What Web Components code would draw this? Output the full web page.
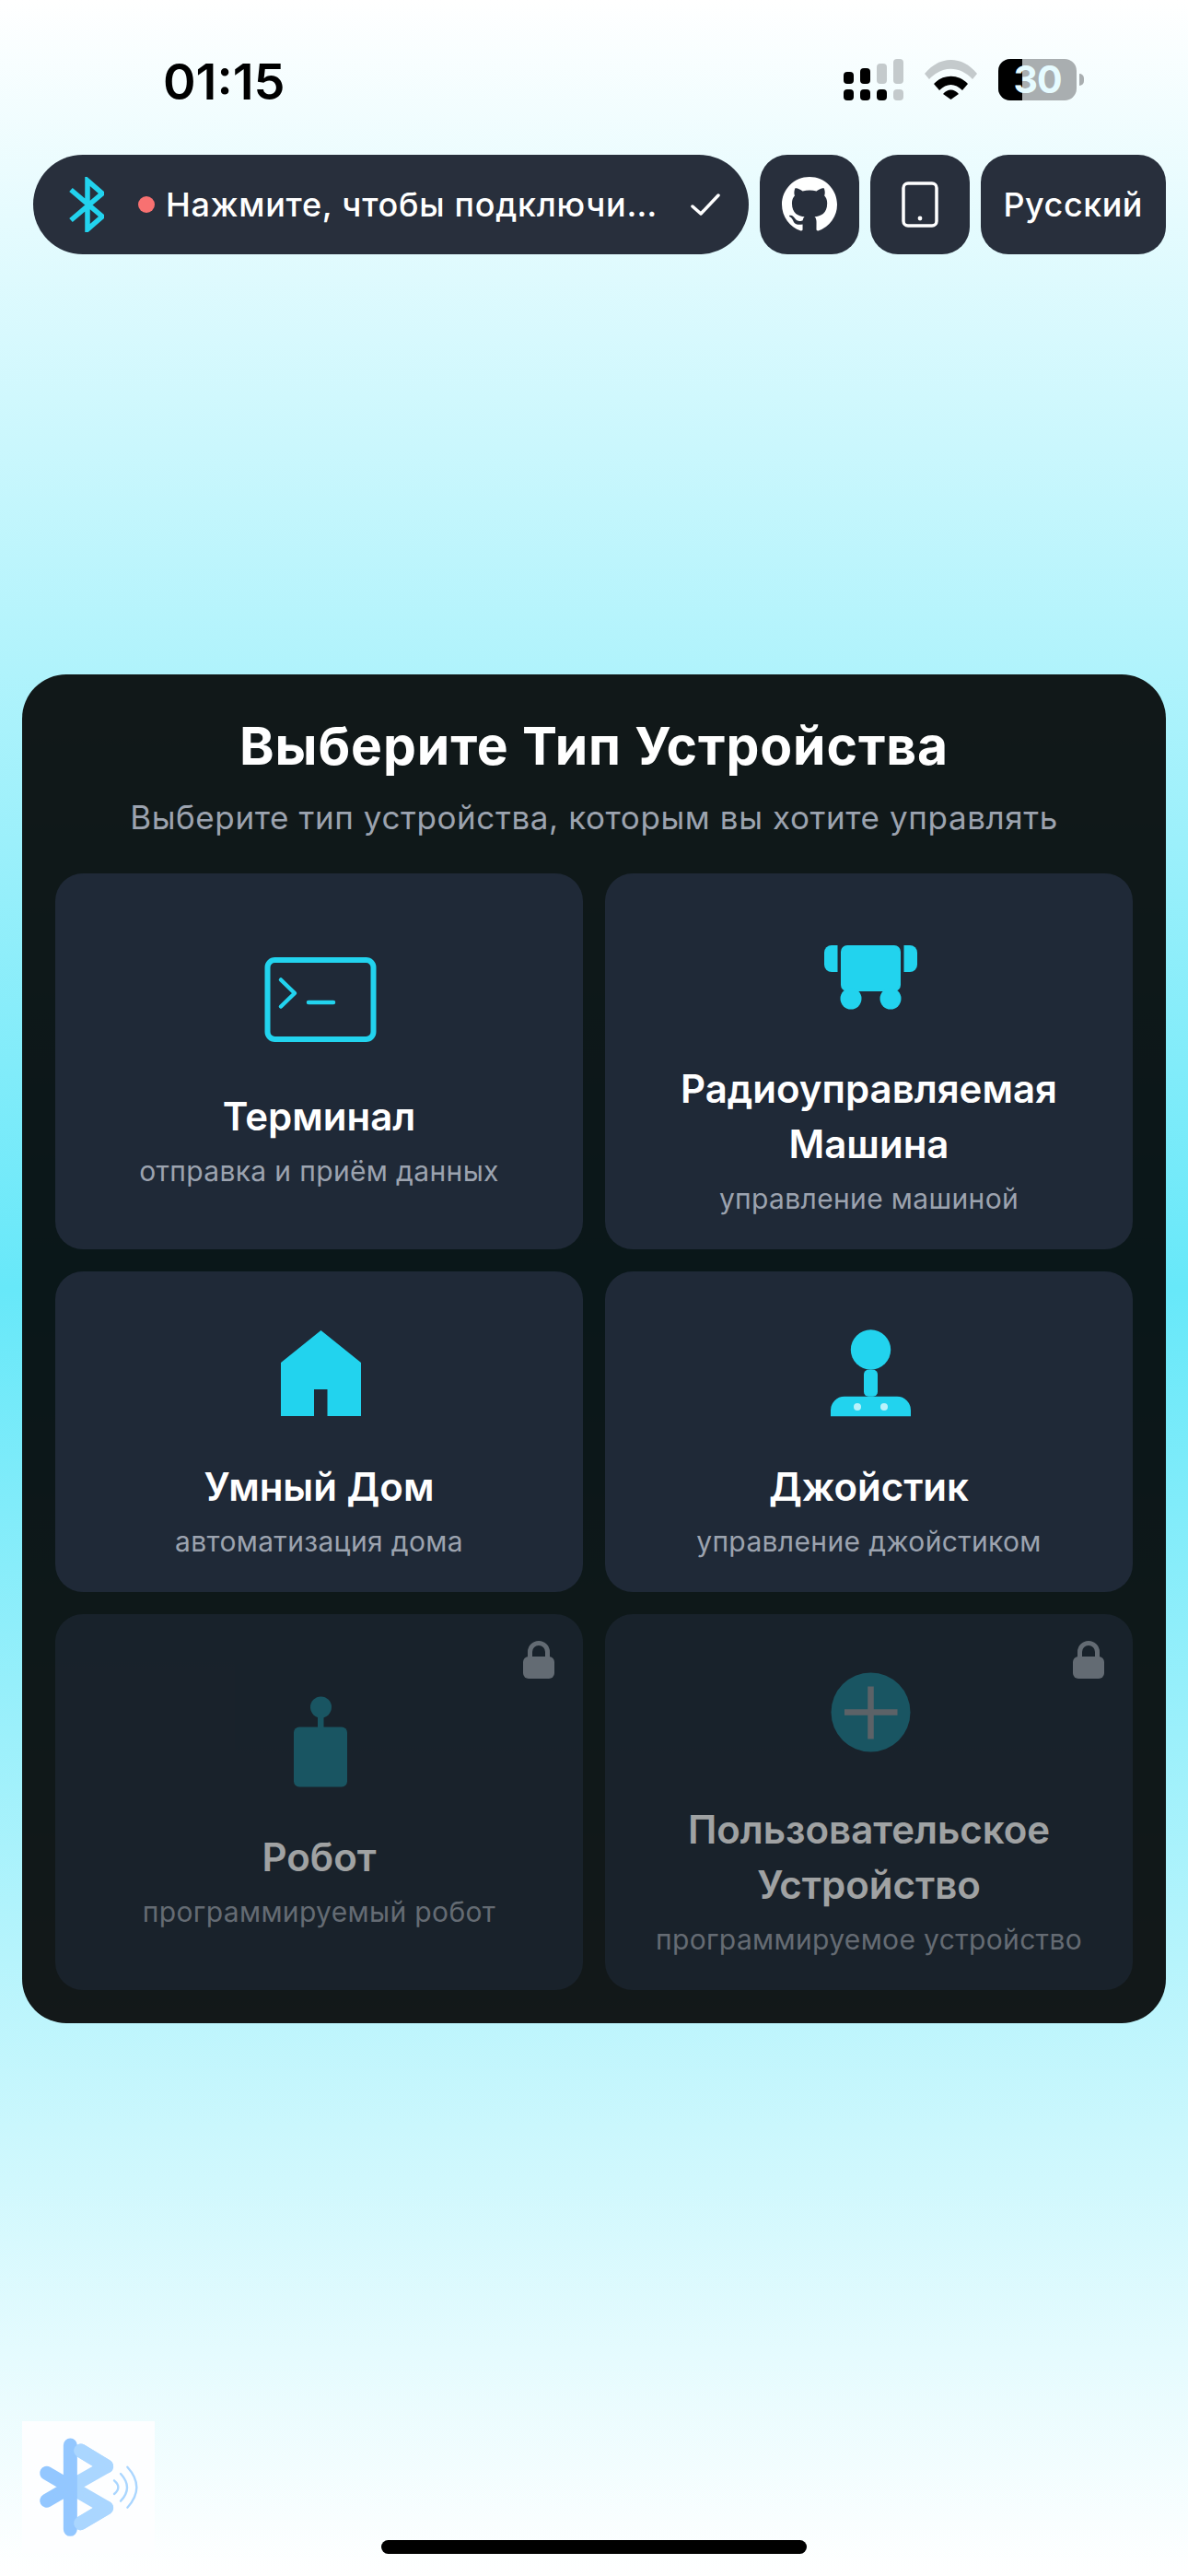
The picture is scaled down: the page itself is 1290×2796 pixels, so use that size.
<!DOCTYPE html>
<html lang="ru">
<head>
<meta charset="utf-8">
<title>Выберите Тип Устройства</title>
<style>
    html, body { margin: 0; padding: 0; }
    body {
        width: 1290px;
        height: 2796px;
        overflow: hidden;
        position: relative;
        background: linear-gradient(to bottom, #ffffff 0%, #67e8f9 50%, #ffffff 100%);
        font-family: Inter, "Noto Sans", sans-serif;
    }
</style>
</head>
<body>
<status-bar time="01:15"></status-bar>
<top-bar>
    <connect-pill>Нажмите, чтобы подключиться</connect-pill>
    <icon-button>
        <svg width="60" height="60" viewBox="0 0 16 16" fill="#fff"><path d="M8 0C3.58 0 0 3.58 0 8c0 3.54 2.29 6.53 5.47 7.59.4.07.55-.17.55-.38 0-.19-.01-.82-.01-1.49-2.01.37-2.53-.49-2.69-.94-.09-.23-.48-.94-.82-1.13-.28-.15-.68-.52-.01-.53.63-.01 1.08.58 1.23.82.72 1.21 1.87.87 2.33.66.07-.52.28-.87.51-1.07-1.78-.2-3.64-.89-3.64-3.95 0-.87.31-1.59.82-2.15-.08-.2-.36-1.02.08-2.12 0 0 .67-.21 2.2.82.64-.18 1.32-.27 2-.27s1.36.09 2 .27c1.53-1.04 2.2-.82 2.2-.82.44 1.1.16 1.92.08 2.12.51.56.82 1.27.82 2.15 0 3.07-1.87 3.75-3.65 3.95.29.25.54.73.54 1.48 0 1.07-.01 1.93-.01 2.2 0 .21.15.46.55.38A8.01 8.01 0 0 0 16 8c0-4.42-3.58-8-8-8z"/></svg>
    </icon-button>
    <icon-button>
        <svg width="40" height="50" viewBox="0 0 40 50" fill="none"><rect x="2" y="2" width="36" height="46" rx="5" stroke="#fff" stroke-width="3.5"/><circle cx="20" cy="40" r="2.4" fill="#fff"/></svg>
    </icon-button>
    <lang-button>Русский</lang-button>
</top-bar>
<device-panel heading="Выберите Тип Устройства" subheading="Выберите тип устройства, которым вы хотите управлять">
    <device-card name="Терминал" note="отправка и приём данных">
        <svg slot="icon" width="150" height="150" viewBox="0 0 150 150" fill="none" stroke="#22d3ee">
            <rect x="18.5" y="29" width="115" height="86" rx="8" stroke-width="6"/>
            <path d="M33 50.500 48 65 33 79.500" stroke-width="4.500" stroke-linecap="round" stroke-linejoin="round"/>
            <path d="M63 75H90" stroke-width="4.500" stroke-linecap="round"/>
        </svg>
    </device-card>
    <device-card name="Радиоуправляемая Машина" note="управление машиной">
        <svg slot="icon" width="150" height="150" viewBox="0 0 150 150" fill="#22d3ee">
            <rect x="44" y="43" width="65" height="50" rx="7"/>
            <path d="M40.500 43H34a8 8 0 0 0-8 8V64a8 8 0 0 0 8 8H40.500Z"/>
            <path d="M112.500 43H119a8 8 0 0 1 8 8V64a8 8 0 0 1-8 8H112.500Z"/>
            <circle cx="55" cy="101" r="11.500"/>
            <circle cx="98" cy="101" r="11.500"/>
        </svg>
    </device-card>
    <device-card name="Умный Дом" note="автоматизация дома">
        <svg slot="icon" width="150" height="150" viewBox="0 0 150 150" fill="#22d3ee">
            <path d="M76.500 29 120 64V122H83.500V93H69V122H33V64Z"/>
        </svg>
    </device-card>
    <device-card name="Джойстик" note="управление джойстиком">
        <svg slot="icon" width="150" height="150" viewBox="0 0 150 150" fill="#22d3ee">
            <circle cx="76.500" cy="50" r="21.700"/>
            <rect x="69" y="71.700" width="15" height="29" rx="5"/>
            <path d="M33 122.300V116a15 15 0 0 1 15-15.300H105a15 15 0 0 1 15 15.300V122.300Z"/>
            <circle cx="62" cy="112" r="4" fill="#b8f2fb"/>
            <circle cx="91" cy="112" r="4" fill="#b8f2fb"/>
        </svg>
    </device-card>
    <device-card locked name="Робот" note="программируемый робот">
        <svg slot="icon" width="150" height="150" viewBox="0 0 150 150" fill="#22d3ee">
            <rect x="47" y="57.600" width="58" height="65" rx="6"/>
            <rect x="73" y="44" width="6.500" height="14"/>
            <circle cx="76.500" cy="36" r="11.500"/>
        </svg>
    </device-card>
    <device-card locked name="Пользовательское Устройство" note="программируемое устройство">
        <svg slot="icon" width="150" height="150" viewBox="0 0 150 150" fill="#22d3ee">
            <circle cx="76.500" cy="71.500" r="43"/>
            <path d="M76.500 43.500V100.500M48 71.500H105.500" stroke="#fff" stroke-width="6.500" fill="none"/>
        </svg>
    </device-card>
</device-panel>
<brand-logo></brand-logo>
<home-indicator></home-indicator>

<script>
class StatusBar extends HTMLElement {
    connectedCallback() {
        this.attachShadow({ mode: 'open' });
        this.shadowRoot.innerHTML = `
            <style>
                :host {
                    display: flex;
                    justify-content: space-between;
                    align-items: center;
                    height: 45px;
                    padding: 64px 113px 59px 177px;
                    color: #000;
                }
                .time {
                    font: 600 54px/45px Inter, sans-serif;
                    margin-top: 3px;
                }
                .right { display: flex; align-items: center; gap: 23px; }
                .battery { position: relative; width: 85px; height: 45px; border-radius: 13px; background: #a9aeb0; }
                .fill { position: absolute; left: 0; top: 0; bottom: 0; width: 26px; background: #000; border-radius: 13px 0 0 13px; }
                .battery span {
                    position: absolute;
                    left: 0; right: 0; top: 0;
                    text-align: center;
                    font: 700 41px/45px Inter, sans-serif;
                    color: #e6fbff;
                    letter-spacing: -1px;
                }
                .batt { display: flex; align-items: center; gap: 3px; }
                .nub { width: 5px; height: 13px; border-radius: 0 5px 5px 0; background: #a9aeb0; }
                svg { display: block; }
            </style>
            <div class="time">${this.getAttribute('time')}</div>
            <div class="right">
                <svg width="65" height="45" viewBox="0 0 65 45">
                    <g fill="#000">
                        <rect x="0" y="14" width="11" height="13" rx="4"/>
                        <rect x="18" y="10" width="11" height="17" rx="4"/>
                        <rect x="0" y="33" width="11" height="12" rx="4"/>
                        <rect x="18" y="33" width="11" height="12" rx="4"/>
                        <rect x="36" y="33" width="11" height="12" rx="4"/>
                    </g>
                    <g fill="#c4cacc">
                        <rect x="36" y="5" width="11" height="22" rx="4"/>
                        <rect x="54" y="0" width="11" height="27" rx="4"/>
                        <rect x="54" y="33" width="11" height="12" rx="4"/>
                    </g>
                </svg>
                <svg width="57" height="43" viewBox="0 0 57 43">
                    <path d="M0 15C16-5 41-5 57 15L52 21C38 6 19 6 5 21Z" fill="#c4cacc"/>
                    <path d="M10 26C20 15 37 15 47 26L41 33C33 25 24 25 16 33Z" fill="#000"/>
                    <path d="M20 37C25 31 32 31 37 37L28.500 43Z" fill="#000"/>
                </svg>
                <div class="batt">
                    <div class="battery"><div class="fill"></div><span>30</span></div>
                    <div class="nub"></div>
                </div>
            </div>
        `;
    }
}

class TopBar extends HTMLElement {
    connectedCallback() {
        this.attachShadow({ mode: 'open' });
        this.shadowRoot.innerHTML = `
            <style>
                :host {
                    display: flex;
                    gap: 12px;
                    height: 108px;
                    padding: 0 24px 0 36px;
                    margin-bottom: 456px;
                }
            </style>
            <slot></slot>
        `;
    }
}

class ConnectPill extends HTMLElement {
    connectedCallback() {
        this.attachShadow({ mode: 'open' });
        this.shadowRoot.innerHTML = `
            <style>
                :host {
                    display: flex;
                    align-items: center;
                    flex: 1;
                    min-width: 0;
                    background: #282f3c;
                    border-radius: 54px;
                    padding: 0 31px 0 39px;
                    color: #fff;
                    font: 500 36px/108px Inter, sans-serif;
                    letter-spacing: 0.72px;
                }
                .bt { flex: none; margin-right: 37px; display: block; }
                .dot { flex: none; width: 18px; height: 18px; border-radius: 50%; background: #f87171; margin-right: 12px; }
                .text { flex: 1; min-width: 0; overflow: hidden; white-space: nowrap; text-overflow: ellipsis; }
                .check { flex: none; margin-left: 24px; display: block; }
            </style>
            <svg class="bt" width="38" height="60" viewBox="0 0 38 60" fill="none" stroke="#22d3ee" stroke-width="5.500" stroke-miterlimit="8">
                <path d="M2 14 36 43 20 57V4L36 18 2 47"/>
            </svg>
            <span class="dot"></span>
            <span class="text"><slot></slot></span>
            <svg class="check" width="32" height="24" viewBox="0 0 32 24" fill="none" stroke="#fff" stroke-width="3.500" stroke-linecap="round" stroke-linejoin="round">
                <path d="M2 14 11 22 30 2"/>
            </svg>
        `;
    }
}

class IconButton extends HTMLElement {
    connectedCallback() {
        this.attachShadow({ mode: 'open' });
        this.shadowRoot.innerHTML = `
            <style>
                :host {
                    display: flex;
                    flex: none;
                    align-items: center;
                    justify-content: center;
                    width: 108px;
                    height: 108px;
                    background: #282f3c;
                    border-radius: 30px;
                }
            </style>
            <slot></slot>
        `;
    }
}

class LangButton extends HTMLElement {
    connectedCallback() {
        this.attachShadow({ mode: 'open' });
        this.shadowRoot.innerHTML = `
            <style>
                :host {
                    display: flex;
                    flex: none;
                    align-items: center;
                    padding: 0 25px;
                    height: 108px;
                    background: #282f3c;
                    border-radius: 30px;
                    color: #fff;
                    font: 500 36px/108px Inter, sans-serif;
                    letter-spacing: 0.5px;
                }
            </style>
            <slot></slot>
        `;
    }
}

class DevicePanel extends HTMLElement {
    connectedCallback() {
        this.attachShadow({ mode: 'open' });
        this.shadowRoot.innerHTML = `
            <style>
                :host {
                    display: block;
                    margin: 0 24px;
                    padding: 36px;
                    border-radius: 48px;
                    background: rgba(0, 0, 0, 0.9);
                }
                h1 {
                    margin: 0;
                    text-align: center;
                    color: #fff;
                    font: 700 57px/84px Inter, sans-serif;
                    letter-spacing: 0.9px;
                }
                p {
                    margin: 11px 0 37px;
                    text-align: center;
                    color: #9ca3af;
                    font: 400 35px/48px Inter, sans-serif;
                    letter-spacing: 0.6px;
                }
                .grid {
                    display: grid;
                    grid-template-columns: 1fr 1fr;
                    gap: 24px;
                }
            </style>
            <h1>${this.getAttribute('heading')}</h1>
            <p>${this.getAttribute('subheading')}</p>
            <div class="grid"><slot></slot></div>
        `;
    }
}

class DeviceCard extends HTMLElement {
    connectedCallback() {
        const locked = this.hasAttribute('locked');
        this.attachShadow({ mode: 'open' });
        this.shadowRoot.innerHTML = `
            <style>
                :host {
                    display: flex;
                    flex-direction: column;
                    align-items: center;
                    justify-content: center;
                    position: relative;
                    padding: 35px 24px 34px;
                    border-radius: 30px;
                    background: #1f2937;
                    text-align: center;
                }
                :host([locked]) { opacity: 0.6; }
                :host([locked]) .icon { opacity: 0.5; }
                .icon { height: 150px; margin-bottom: 19px; }
                .name { color: #fff; font: 600 42px/60px Inter, sans-serif; margin-bottom: 8px; }
                .note { color: #9ca3af; font: 400 30px/42px Inter, sans-serif; letter-spacing: 0.35px; }
                .lock { position: absolute; top: 29px; right: 31px; display: block; }
            </style>
            ${locked ? `<svg class="lock" width="34" height="41" viewBox="0 0 34 41">
                <path d="M7.500 20V12a9.500 9.500 0 0 1 19 0V20" fill="none" stroke="#9ca3af" stroke-width="5"/>
                <rect x="0" y="17" width="34" height="24" rx="6" fill="#9ca3af"/>
            </svg>` : ''}
            <div class="icon"><slot name="icon"></slot></div>
            <div class="name">${this.getAttribute('name')}</div>
            <div class="note">${this.getAttribute('note')}</div>
        `;
    }
}

class BrandLogo extends HTMLElement {
    connectedCallback() {
        this.attachShadow({ mode: 'open' });
        this.shadowRoot.innerHTML = `
            <style>
                :host {
                    position: absolute;
                    left: 24px;
                    top: 2628px;
                    width: 144px;
                    height: 144px;
                    background: #fdfeff;
                }
                svg { display: block; }
            </style>
            <svg width="144" height="144" viewBox="0 0 432 432" fill="none" stroke-linecap="round" stroke-linejoin="round">
                <path d="M191 96 275 147 157 214 275 282 191 332" stroke="#aad6ff" stroke-width="45"/>
                <path d="M80 169 157 214 80 259M157 78V352" stroke="#93c7ff" stroke-width="45"/>
                <path d="M191 96 275 147" stroke="#aad6ff" stroke-width="45"/>
                <path d="M275 282 191 332" stroke="#aad6ff" stroke-width="45"/>
                <path d="M300 193Q326 215 300 237M321 171Q363 216 321 260M343 149Q403 215 343 281" stroke="#aad6ff" stroke-width="7"/>
            </svg>
        `;
    }
}

class HomeIndicator extends HTMLElement {
    connectedCallback() {
        this.attachShadow({ mode: 'open' });
        this.shadowRoot.innerHTML = `
            <style>
                :host {
                    position: absolute;
                    left: 414px;
                    top: 2757px;
                    width: 462px;
                    height: 15px;
                    border-radius: 8px;
                    background: #000;
                }
            </style>
        `;
    }
}

customElements.define('status-bar', StatusBar);
customElements.define('top-bar', TopBar);
customElements.define('connect-pill', ConnectPill);
customElements.define('icon-button', IconButton);
customElements.define('lang-button', LangButton);
customElements.define('device-panel', DevicePanel);
customElements.define('device-card', DeviceCard);
customElements.define('brand-logo', BrandLogo);
customElements.define('home-indicator', HomeIndicator);
</script>
</body>
</html>
